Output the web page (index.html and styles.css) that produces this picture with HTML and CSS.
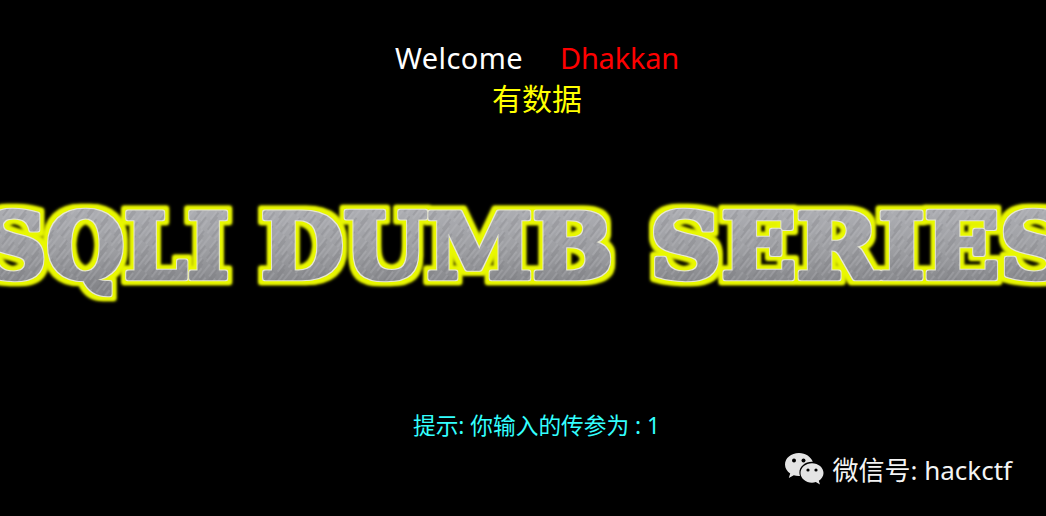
FILE: index.html
```html
<!DOCTYPE html>
<html lang="zh">
<head>
<meta charset="utf-8">
<title>SQLI DUMB SERIES</title>
<link rel="stylesheet" href="styles.css">
</head>
<body>
<main class="page">
  <div class="welcome">
    <div class="line"><span class="white">Welcome</span><span class="red">Dhakkan</span></div>
    <div class="line yellow">有数据</div>
  </div>
  <svg class="banner" viewBox="0 0 1046 130" width="1046" height="130" role="img" aria-label="SQLI DUMB SERIES">
    <defs>
      <linearGradient id="shade" gradientUnits="userSpaceOnUse" x1="0" y1="20" x2="0" y2="100">
        <stop offset="0" stop-color="#aeafb4"/>
        <stop offset="0.55" stop-color="#9d9ea2"/>
        <stop offset="1" stop-color="#85868a"/>
      </linearGradient>
      <pattern id="brush" width="23" height="17" patternUnits="userSpaceOnUse" patternTransform="rotate(-52)">
        <path d="M0 3H15M6 7H23M0 12H10M13 14H23" stroke="#c8c9ce" stroke-opacity=".4" stroke-width="1" fill="none"/>
        <path d="M3 1H19M0 9H12M10 16H23" stroke="#6c6d70" stroke-opacity=".4" stroke-width="1" fill="none"/>
      </pattern>
      <pattern id="metal" x="-40" y="0" width="1160" height="130" patternUnits="userSpaceOnUse">
        <rect width="1160" height="130" fill="url(#shade)"/>
        <rect width="1160" height="130" fill="url(#brush)"/>
      </pattern>
      <filter id="halo" filterUnits="userSpaceOnUse" x="-40" y="0" width="1160" height="130" color-interpolation-filters="sRGB">
        <feMorphology in="SourceAlpha" operator="dilate" radius="5" result="wide"/>
        <feGaussianBlur in="wide" stdDeviation="1.800" result="wideSoft"/>
        <feFlood flood-color="#d6e000"/>
        <feComposite in2="wideSoft" operator="in" result="far"/>
        <feMorphology in="SourceAlpha" operator="dilate" radius="4" result="near"/>
        <feGaussianBlur in="near" stdDeviation="0.800" result="nearSoft"/>
        <feFlood flood-color="#e9f800"/>
        <feComposite in2="nearSoft" operator="in" result="rim"/>
        <feMorphology in="SourceAlpha" operator="dilate" radius="1" result="thin"/>
        <feFlood flood-color="#e6e6d2"/>
        <feComposite in2="thin" operator="in" result="edge"/>
        <feMerge>
          <feMergeNode in="far"/>
          <feMergeNode in="rim"/>
          <feMergeNode in="edge"/>
          <feMergeNode in="SourceGraphic"/>
        </feMerge>
      </filter>
    </defs>
    <g class="title" filter="url(#halo)">
      <text x="-18" y="92" textLength="247" lengthAdjust="spacingAndGlyphs">SQLI</text>
      <text x="261" y="92" textLength="352" lengthAdjust="spacingAndGlyphs">DUMB</text>
      <text x="650" y="92" textLength="421" lengthAdjust="spacingAndGlyphs">SERIES</text>
    </g>
  </svg>
  <div class="hint">提示: 你输入的传参为 : 1</div>
  <div class="mark">
    <svg class="wechat" viewBox="0 0 40 36" width="40" height="36" aria-hidden="true">
      <path d="M15 1C7 1 1 6.200 1 12.600c0 3.700 2 6.800 5.200 9L4.800 26l5-2.700c1.500.5 3.200.7 5 .7h1.200c-.4-1.100-.6-2.200-.6-3.400 0-6 5.600-10.800 12.500-10.800h.9C27.100 5 21.600 1 15 1z" fill="#e4e4e4"/>
      <path d="M39.500 21c0-5.300-5.200-9.700-11.500-9.700S16.500 15.700 16.500 21 21.700 30.700 28 30.700c1.300 0 2.600-.2 3.800-.6l4.200 2.400-1.200-3.800c2.900-1.800 4.700-4.600 4.700-7.700z" fill="#e4e4e4"/>
      <circle cx="10" cy="8.500" r="2" fill="#000"/><circle cx="19.500" cy="8.500" r="2" fill="#000"/>
      <circle cx="24" cy="18" r="1.600" fill="#000"/><circle cx="32" cy="18" r="1.600" fill="#000"/>
    </svg>
    <span>微信号: hackctf</span>
  </div>
</main>
</body>
</html>
```

FILE: styles.css
```css
html, body { margin: 0; padding: 0; background: #000; }
body { width: 1046px; height: 516px; overflow: hidden; font-family: "Noto Sans", "Noto Sans CJK SC", sans-serif; }
.page { display: flex; flex-direction: column; align-items: center; height: 516px; padding-top: 37px; box-sizing: border-box; }
.welcome { display: flex; flex-direction: column; align-items: center; margin-left: 28px; font-size: 29px; line-height: 41px; }
.line { display: flex; gap: 37px; justify-content: center; }
.white { color: #fff; letter-spacing: .4px; }
.red { color: #f00; letter-spacing: -.2px; }
.yellow { color: #ff0; font-size: 30px; }
.banner { display: block; margin-top: 67px; flex: none; }
.title { font-family: "DejaVu Serif", serif; font-weight: 700; font-size: 90px; stroke-linejoin: round; fill: url(#metal); stroke: url(#metal); stroke-width: 4.500px; }
.hint { margin-top: 95px; margin-left: 27px; color: #3ff; font-size: 22.700px; line-height: 30px; }
.mark { display: flex; align-items: center; gap: 8px; align-self: flex-end; margin: 11px 34px 0 0; color: #f4f4f4; font-size: 26px; line-height: 36px; }
.wechat { flex: none; }
```
